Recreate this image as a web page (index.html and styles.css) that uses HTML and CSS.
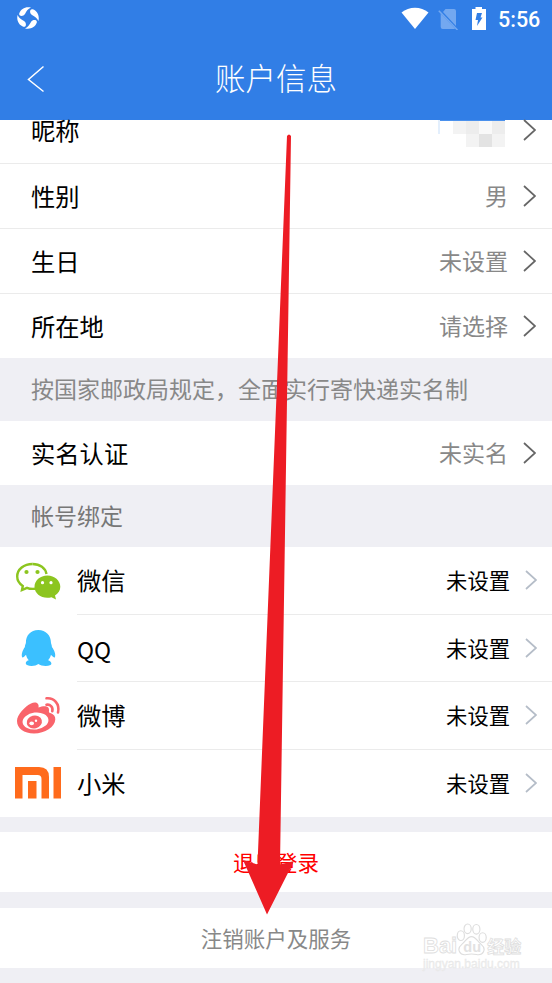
FILE: index.html
```html
<!DOCTYPE html>
<html lang="zh-CN">
<head>
<meta charset="utf-8">
<title>账户信息</title>
<link rel="stylesheet" href="styles.css">
</head>
<body>
<div class="screen">
  <header class="header">
    <div class="status">
      <svg class="app-icon" viewBox="0 0 22 22" width="22" height="22" fill="#fff">
        <path id="blade" d="M2.300 6.200C3.800 2 8.500-.8 14 .6C10.800 2 9.700 4 8 7C6.200 10 1.200 9.300 2.300 6.200Z"/>
        <use href="#blade" transform="rotate(90 11 11)"/>
        <use href="#blade" transform="rotate(180 11 11)"/>
        <use href="#blade" transform="rotate(270 11 11)"/>
      </svg>
      <div class="status-right">
        <svg class="wifi" viewBox="0 0 28 22" width="28" height="22"><path d="M.5 5.500C8-.8 20-.8 27.500 5.500L14 22Z" fill="#fff"/></svg>
        <svg class="sim" viewBox="0 0 20 22" width="20" height="22"><path d="M7.500 1H16Q18 1 18 3V18L5 4ZM2.700 5.500L17 20.500Q16.500 21 16 21H4.700Q2.700 21 2.700 19Z" fill="#73a8f0"/><path d="M.8 2.800L19.500 22" stroke="#73a8f0" stroke-width="1.500"/></svg>
        <svg class="battery" viewBox="0 0 14 23" width="14" height="23"><path d="M3.500 0H10V2H14V23H0V2H3.500Z" fill="#fff"/><path d="M5 6H10L8.500 10.500H10.500L5 19L6 13H3.500Z" fill="#317ee6"/></svg>
        <span class="clock">5:56</span>
      </div>
    </div>
    <div class="titlebar">
      <svg class="back" viewBox="0 0 18 28" width="18" height="28"><path d="M16.500 1.500L1.500 14.500L16.500 26.500" fill="none" stroke="#fff" stroke-width="1.500"/></svg>
      <h1 class="title">账户信息</h1>
    </div>
  </header>

  <main>
    <section class="profile">
      <div class="row row-first"><span class="label">昵称</span>
        <svg class="mosaic" viewBox="0 0 67 27" width="67" height="27" shape-rendering="crispEdges"><path d="M0 0H2V14H0Z" fill="#e3effd"/><path d="M2 0H67V1H2Z" fill="#4b91ed"/><path d="M15 1H28V14H15ZM28 14H41V27H28ZM54 14H67V27H54Z" fill="#f3f3f3"/><path d="M28 1H41V14H28ZM54 1H67V14H54Z" fill="#ededed"/><path d="M41 1H54V14H41Z" fill="#f9f9f9"/><path d="M41 14H54V27H41Z" fill="#e3e3e3"/></svg>
        <svg class="chevron" viewBox="0 0 13 22" width="13" height="22"><path d="M1 1L12 11L1 21"/></svg></div>
      <div class="row"><span class="label">性别</span><span class="value">男</span><svg class="chevron" viewBox="0 0 13 22" width="13" height="22"><path d="M1 1L12 11L1 21"/></svg></div>
      <div class="row"><span class="label">生日</span><span class="value">未设置</span><svg class="chevron" viewBox="0 0 13 22" width="13" height="22"><path d="M1 1L12 11L1 21"/></svg></div>
      <div class="row row-last"><span class="label">所在地</span><span class="value">请选择</span><svg class="chevron" viewBox="0 0 13 22" width="13" height="22"><path d="M1 1L12 11L1 21"/></svg></div>
    </section>
    <p class="caption caption-rule">按国家邮政局规定，全面实行寄快递实名制</p>
    <div class="row row-last"><span class="label">实名认证</span><span class="value">未实名</span><svg class="chevron" viewBox="0 0 13 22" width="13" height="22"><path d="M1 1L12 11L1 21"/></svg></div>
    <p class="caption">帐号绑定</p>
    <section class="accounts">
      <div class="account">
        <svg class="brand" viewBox="0 0 50 44" width="50" height="44">
          <path d="M18.500 5C10 5 3.200 10.300 3.200 17.500C3.200 21.500 5.500 24.800 8.800 27L8 31L13 28.800C15 29.700 18 30 21 29.800" fill="none" stroke="#8cc51f" stroke-width="2.400"/>
          <path d="M18.500 5C26 5 31.500 9 32.500 15" fill="none" stroke="#8cc51f" stroke-width="2.400"/>
          <circle cx="12.500" cy="13" r="2.100" fill="#8cc51f"/><circle cx="23.500" cy="13" r="2.100" fill="#8cc51f"/>
          <path d="M33.500 16.500C40.500 16.500 46.300 21.500 46.300 27.800C46.300 31.500 44.300 34.500 41 36.600L42 40.500L37.500 38.200C29 40.500 20.500 35.500 20.500 27.800C20.500 21.500 26 16.500 33.500 16.500Z" fill="#8cc51f"/>
          <circle cx="28.500" cy="23.700" r="1.600" fill="#fff"/><circle cx="37" cy="23.700" r="1.600" fill="#fff"/>
        </svg>
        <div class="account-body"><span class="label">微信</span><span class="bound">未设置</span><svg class="chevron pale" viewBox="0 0 12 20" width="12" height="20"><path d="M1 1L11 10L1 19"/></svg></div>
      </div>
      <div class="account">
        <svg class="brand" viewBox="0 0 50 44" width="50" height="44"><path d="M24.300 4C16.500 4 11.800 9.500 11.900 17C11.500 18.500 10.800 19.700 10.900 21C8.500 24.500 7 28.500 8.200 31.500C9.800 31.500 11.200 29.800 12 28.800C12.500 31 13.300 32.800 14.800 34.300C11.500 35 11 38 13 39C16.500 40.800 22 40 24.300 38C27 40 33 40.800 36.500 39C38.500 38 37 35 34 34.300C35.500 32.800 36.500 31 37 28.800C38 30 39.300 31.500 40.900 31.500C42 28.500 40.500 24.500 37.900 21C38 19.500 37.300 18.500 37 17C37 9.500 32 4 24.300 4Z" fill="#3bc0ff"/></svg>
        <div class="account-body"><span class="label latin">QQ</span><span class="bound">未设置</span><svg class="chevron pale" viewBox="0 0 12 20" width="12" height="20"><path d="M1 1L11 10L1 19"/></svg></div>
      </div>
      <div class="account">
        <svg class="brand" viewBox="0 0 50 44" width="50" height="44">
          <path d="M17 9.500C21 7.500 25.500 8.500 24.500 13.500C30 11.500 35.500 11.500 35 16.500C34.900 18 34.500 18.500 37 19.300C39.500 20.300 41.500 22.500 41.300 25.500C41 33 31 39.500 20 39.500C10 39.500 3 34.500 3 27C3 20.500 11 12.500 17 9.500Z" fill="#f9646b"/>
          <ellipse cx="21.500" cy="27" rx="13" ry="8.500" transform="rotate(-7 21.500 27)" fill="#fff"/>
          <ellipse cx="20.300" cy="28" rx="7.700" ry="6.500" transform="rotate(-15 20.300 28)" fill="#f9646b"/>
          <ellipse cx="17.700" cy="29.300" rx="2.300" ry="1.900" fill="#fff"/><circle cx="22" cy="26.700" r="1.200" fill="#fff"/>
          <path d="M32.500 4.300C40 3.500 46 10 44 18.500M32.500 10.800C36 10 39.300 13 38.300 17.200" fill="none" stroke="#f9646b" stroke-width="2.600" stroke-linecap="round"/>
        </svg>
        <div class="account-body"><span class="label">微博</span><span class="bound">未设置</span><svg class="chevron pale" viewBox="0 0 12 20" width="12" height="20"><path d="M1 1L11 10L1 19"/></svg></div>
      </div>
      <div class="account account-last">
        <svg class="brand" viewBox="0 0 50 44" width="50" height="44"><path d="M1 6H25Q35 6 35 16V37.500H27.500V18Q27.500 14 23.500 14H8.500V37.500H1ZM14 20H22.500V37.500H14ZM39.500 6H47V37.500H39.500Z" fill="#ff6b1c"/></svg>
        <div class="account-body"><span class="label">小米</span><span class="bound">未设置</span><svg class="chevron pale" viewBox="0 0 12 20" width="12" height="20"><path d="M1 1L11 10L1 19"/></svg></div>
      </div>
    </section>
    <button class="action logout">退出登录</button>
    <button class="action cancel">注销账户及服务</button>
  </main>

  <svg class="arrow" viewBox="0 0 552 983" width="552" height="983"><path d="M287 136Q289 133 291 136L280 864.500L294 861L267 914.500L243 860L257.500 864.500Z" fill="#ed1c24"/></svg>

  <div class="watermark">
    <div class="mark-top">
      <span class="mark-latin">Bai</span>
      <svg class="paw" viewBox="0 0 32 34" width="31" height="33"><g fill="#fff" stroke="#dedede" stroke-width="1.200"><ellipse cx="12" cy="6" rx="3.700" ry="5"/><ellipse cx="21" cy="6.500" rx="3.700" ry="5"/><ellipse cx="5" cy="13" rx="3.700" ry="5"/><ellipse cx="27.500" cy="15" rx="3.700" ry="5"/><path d="M16 14C20.500 14 22 19 26 22C32 27 28 34 21 32.500Q16 31.500 11 32.500C4 34 0 27 6 22C10 19 11.500 14 16 14Z"/></g><text x="7.500" y="29.500" class="du">du</text></svg>
      <span class="mark-cn">经验</span>
    </div>
    <div class="mark-url">jingyan.baidu.com</div>
  </div>
</div>
</body>
</html>
```
FILE: styles.css
```css
* { box-sizing: border-box; }
body {
  margin: 0;
  background: #efeff4;
  color: #000;
  font-family: Roboto, "Noto Sans CJK SC", sans-serif;
}
.screen {
  position: relative;
  width: 552px;
  height: 983px;
  overflow: hidden;
  background: #efeff4;
}
svg { display: block; flex: none; }
.header { height: 120px; background: #317ee6; color: #fff; }
.status {
  display: flex;
  justify-content: space-between;
  height: 38px;
  padding: 7px 12px 0 17px;
}
.status-right { display: flex; align-items: flex-start; }
.sim { margin-left: 9px; margin-top: 1px; }
.battery { margin-left: 14px; }
.clock {
  width: 42px;
  margin-left: 12px;
  font-size: 21.500px;
  font-weight: 500;
  line-height: 25px;
  white-space: nowrap;
}
.titlebar {
  display: grid;
  grid-template-columns: 60px 1fr 60px;
  align-items: center;
  height: 81px;
}
.back { margin-left: 27px; }
.title {
  margin: 0;
  padding-top: 3px;
  font-size: 30.5px;
  font-weight: 300;
  line-height: 44px;
  text-align: center;
}
.row {
  display: flex;
  align-items: center;
  height: 65px;
  padding: 0 16px 0 31px;
  border-bottom: 1px solid #ebebeb;
  background: #fff;
}
.row-first { height: 44px; align-items: flex-start; }
.row-first .label { margin-top: -9px; }
.row-first .chevron { margin-top: -1px; }
.row-last { height: 64px; border-bottom: 0; }
.label { padding-top: 3px; font-size: 24.300px; line-height: 36px; }
.value, .bound { margin-left: auto; padding-top: 3px; line-height: 34px; }
.value { font-size: 23px; color: #888; }
.bound { font-size: 21.300px; }
.account .label, .account .bound { padding-top: 4px; }
.account .latin { font-family: "Noto Sans CJK SC", sans-serif; font-size: 23px; padding-top: 2px; }
.mosaic { margin-left: auto; }
.chevron { margin-left: 15px; fill: none; stroke: #666; stroke-width: 1.700; }
.row-first .chevron { margin-left: 18px; }
.pale { stroke: #b5bdc8; }
.caption {
  height: 62px;
  margin: 0;
  padding: 2px 0 0 31px;
  background: #efeff4;
  color: #777;
  font-size: 23px;
  line-height: 62px;
}
.caption-rule { height: 63px; color: #888; }
.accounts { background: #fff; }
.account { display: flex; align-items: center; height: 67.500px; padding-left: 14px; }
.brand { margin-right: 13px; }
.account-body {
  display: flex;
  flex: 1;
  align-items: center;
  height: 100%;
  padding-right: 15px;
  border-bottom: 1px solid #ebebeb;
}
.account-last .account-body { border-bottom: 0; }
.action {
  display: block;
  width: 100%;
  height: 60px;
  border: 0;
  padding: 0 0 2px;
  background: #fff;
  font-family: inherit;
  font-size: 21.500px;
}
.logout { margin-top: 15px; color: #f00; }
.cancel { margin-top: 16px; color: #888; }
.arrow { position: absolute; left: 0; top: 0; }
.watermark {
  position: absolute;
  left: 423px;
  top: 922px;
  width: 104px;
  color: #fff;
  white-space: nowrap;
  -webkit-text-stroke: 0.800px #dedede;
}
.mark-top {
  display: flex;
  height: 34px;
  align-items: flex-end;
}
.mark-latin { font: bold 22px/20px "Liberation Sans", sans-serif; }
.paw { margin-left: -1px; }
.mark-cn { font: bold 17px/21px "Noto Sans CJK SC", sans-serif; }
.du { font: bold 15px "Liberation Sans", sans-serif; fill: #e2e2e2; stroke: none; }
.mark-url { font: 12px/16px "Liberation Sans", sans-serif; color: #eee; -webkit-text-stroke: 0.300px #e6e6e6; }
```
